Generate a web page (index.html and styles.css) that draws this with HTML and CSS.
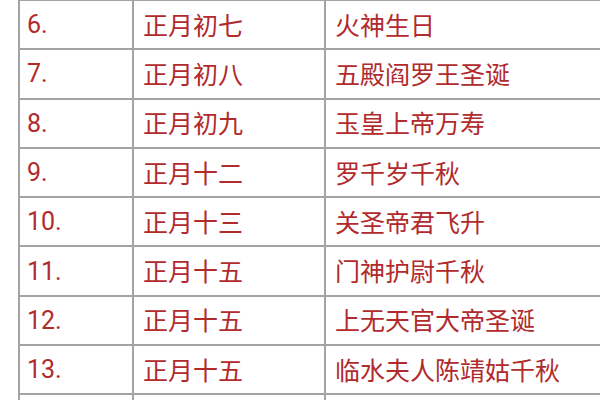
FILE: index.html
```html
<!DOCTYPE html>
<html lang="zh">
<head>
<meta charset="utf-8">
<link rel="stylesheet" href="styles.css">
</head>
<body>
<table class="list">
<colgroup><col class="c-num"><col class="c-date"><col class="c-name"></colgroup>
<tr><td class="num">6.</td><td class="date">正月初七</td><td class="name">火神生日</td></tr>
<tr><td class="num">7.</td><td class="date">正月初八</td><td class="name">五殿阎罗王圣诞</td></tr>
<tr><td class="num">8.</td><td class="date">正月初九</td><td class="name">玉皇上帝万寿</td></tr>
<tr><td class="num">9.</td><td class="date">正月十二</td><td class="name">罗千岁千秋</td></tr>
<tr><td class="num">10.</td><td class="date">正月十三</td><td class="name">关圣帝君飞升</td></tr>
<tr><td class="num">11.</td><td class="date">正月十五</td><td class="name">门神护尉千秋</td></tr>
<tr><td class="num">12.</td><td class="date">正月十五</td><td class="name">上无天官大帝圣诞</td></tr>
<tr><td class="num">13.</td><td class="date">正月十五</td><td class="name">临水夫人陈靖姑千秋</td></tr>
<tr><td class="num"></td><td class="date"></td><td class="name"></td></tr>
</table>
</body>
</html>
```
FILE: styles.css
```css
html, body {
  margin: 0;
  padding: 0;
  background: #ffffff;
  overflow: hidden;
}
.list {
  border-collapse: collapse;
  margin: -1px 0 0 18px;
  table-layout: fixed;
  width: 700px;
  font-family: Roboto, "Noto Sans CJK SC", sans-serif;
  font-size: 25px;
  color: #b12a2c;
}
.c-num { width: 114px; }
.c-date { width: 192px; }
.list td {
  border: 2px solid #a3a3a3;
  height: 44.3px;
  padding: 3px 0 0 7px;
  vertical-align: middle;
  white-space: nowrap;
  line-height: 1;
}
.list td.num { padding-top: 0; height: 47.3px; }
.list td.date, .list td.name { padding-left: 9px; }
```
